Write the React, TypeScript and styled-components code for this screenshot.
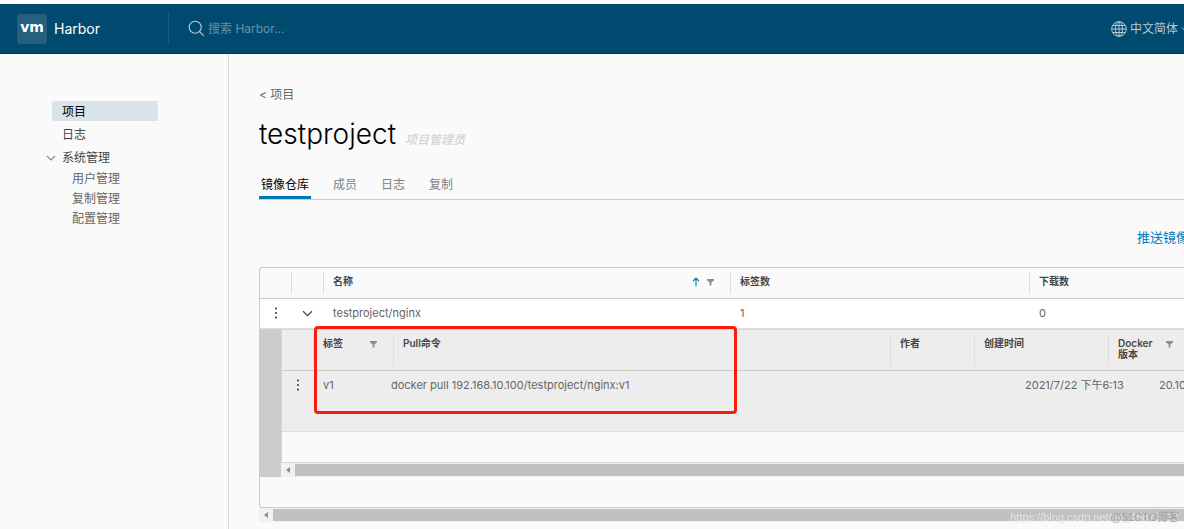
import React from "react";
import styled, { createGlobalStyle } from "styled-components";

const GlobalStyle = createGlobalStyle`
  *, *::before, *::after { box-sizing: border-box; }
  html, body, #root { height: 100%; }
  body {
    margin: 0;
    background: #fafafa;
    color: #666;
    font-family: Inter, "Noto Sans CJK SC", sans-serif;
    font-size: 12px;
    line-height: 20px;
    overflow: hidden;
  }
  a { color: inherit; text-decoration: none; }
  button, input { font: inherit; color: inherit; padding: 0; border: 0; background: none; }
`;

const Page = styled.div`
  min-height: 100%;
  display: flex;
  flex-direction: column;
  border-top: 4px solid #fff;
`;

const Header = styled.header`
  display: flex;
  align-items: center;
  height: 50px;
  padding-left: 17px;
  background: #004a70;
  border-bottom: 1px solid #00385a;
  white-space: nowrap;
  overflow: hidden;
`;

const Brand = styled.a`
  display: flex;
  align-items: center;
  gap: 7px;
  width: 151px;
  color: #fff;
  font-size: 14px;
`;

const Logo = styled.span`
  width: 30px;
  height: 30px;
  border-radius: 3px;
  background: #25617f;
  font-family: "DejaVu Sans", sans-serif;
  font-size: 14px;
  font-weight: 700;
  line-height: 27px;
  text-align: center;
`;

const Search = styled.label`
  flex: 1;
  display: flex;
  align-items: center;
  gap: 3px;
  height: 33px;
  padding-left: 19px;
  border-left: 1px solid #1b5a7c;
  color: #b3c9d4;
`;

const SearchInput = styled.input`
  flex: 1;
  min-width: 0;
  font-size: 12px;
  outline: none;
  &::placeholder { color: #6692a8; opacity: 1; }
`;

const Language = styled.button`
  display: flex;
  align-items: center;
  gap: 3px;
  width: 73px;
  flex: none;
  overflow: hidden;
  color: #b3c9d4;
  svg { flex: none; }
`;

const Body = styled.div`
  flex: 1;
  display: flex;
`;

const Sidebar = styled.nav`
  flex: none;
  width: 229px;
  padding: 47px 70px 0 46px;
  border-right: 1px solid #d9d9d9;
`;

const NavLink = styled.a<{ $active?: boolean }>`
  display: block;
  height: 20px;
  margin: 0 0 3px 6px;
  padding-left: 10px;
  border-radius: 2px 0 0 2px;
  line-height: 22px;
  color: ${(p) => (p.$active ? "#000" : "#454545")};
  background: ${(p) => (p.$active ? "#d9e4ea" : "transparent")};
`;

const NavGroup = styled.button`
  display: flex;
  align-items: center;
  gap: 6px;
  height: 22px;
  color: #454545;
`;

const SubLink = styled.a`
  display: block;
  padding-left: 26px;
`;

const Main = styled.main`
  flex: 1;
  min-width: 0;
  padding: 31px 0 0 30px;
`;

const Title = styled.h1`
  display: flex;
  align-items: baseline;
  gap: 9px;
  margin: 9px 0 0;
  color: #000;
  font-size: 28px;
  font-weight: 300;
  line-height: 40px;
`;

const Role = styled.em`
  color: #ccc;
  font-size: 12px;
  font-weight: 400;
`;

const Tabs = styled.nav`
  display: flex;
  gap: 20px;
  height: 35px;
  margin-top: 5px;
  border-bottom: 1px solid #ccc;
`;

const Tab = styled.a<{ $active?: boolean }>`
  height: 34px;
  padding: 10px 2px 0;
  color: ${(p) => (p.$active ? "#000" : "#808080")};
  border-bottom: 3px solid ${(p) => (p.$active ? "#0079b8" : "transparent")};
`;

const Toolbar = styled.div`
  display: flex;
  justify-content: flex-end;
  padding: 27px 0 20px;
`;

const PushButton = styled.button`
  width: 47px;
  overflow: hidden;
  white-space: nowrap;
  text-align: left;
  color: #0079b8;
  font-size: 13px;
`;

const GridWrap = styled.div`
  position: relative;
`;

const Table = styled.table`
  display: block;
  border: solid #ccc;
  border-width: 1px 0 1px 1px;
  border-radius: 3px 0 0 3px;
  font-size: 11px;
  thead, tbody { display: block; }
`;

const InnerTable = styled(Table)`
  border-radius: 0;
  border-color: #d6d6d6;
  background: #fafafa;
`;

const Row = styled.tr<{ $cols: string; $height: number; $bg?: string }>`
  display: grid;
  grid-template-columns: ${(p) => p.$cols};
  height: ${(p) => p.$height}px;
  background: ${(p) => p.$bg || "transparent"};
  border-bottom: 1px solid #ccc;
`;

const DataRow = styled(Row)`
  border-bottom-color: #ddd;
`;

const Th = styled.th`
  display: flex;
  align-items: flex-start;
  justify-content: space-between;
  min-width: 0;
  margin: 4px 0;
  padding: 4px 15px 0 9px;
  border-left: 1px solid #ddd;
  color: #454545;
  font-size: 10px;
  font-weight: 600;
  line-height: 11px;
  text-align: left;
  svg { flex: none; }
  &:first-child { border-left-color: transparent; }
`;

const WrapTh = styled(Th)`
  padding-right: 10px;
`;

const Td = styled.td<{ $center?: boolean }>`
  min-width: 0;
  padding: ${(p) => (p.$center ? "4px 0 0" : "4px 0 0 10px")};
  text-align: ${(p) => (p.$center ? "center" : "left")};
  overflow: hidden;
  white-space: nowrap;
`;

const IconButton = styled.button`
  display: inline-flex;
  align-items: center;
  justify-content: center;
  height: 20px;
  vertical-align: top;
`;

const HeadIcons = styled.span`
  display: flex;
  gap: 6px;
`;

const Detail = styled.tr`
  display: block;
  padding-left: 21px;
  background: #ccc;
`;

const DetailCell = styled.td`
  display: block;
  padding: 0;
`;

const EmptyRow = styled.tr`
  display: block;
  height: 30px;
`;

const ScrollTrack = styled.div`
  display: flex;
  align-items: center;
  height: 14px;
  background: #f1f1f1;
`;

const ScrollButton = styled.button`
  display: flex;
  align-items: center;
  justify-content: center;
  width: 14px;
  height: 14px;
`;

const ScrollThumb = styled.div`
  flex: 1;
  height: 12px;
  background: #c1c1c1;
`;

const Highlight = styled.div`
  position: absolute;
  left: 55px;
  top: 59px;
  width: 423px;
  height: 88px;
  border: 3px solid #fc1c0c;
  border-radius: 4px;
`;

const Watermark = styled.div<{ $shade: string }>`
  position: fixed;
  right: 5px;
  bottom: 2px;
  color: ${(p) => p.$shade};
  font-family: "Liberation Sans", "Noto Sans CJK SC", sans-serif;
  font-size: 11px;
  line-height: 20px;
`;

const Chevron = ({ size, color }: { size: number; color: string }) => (
  <svg width={size} height={size} viewBox="0 0 10 10" fill="none" stroke={color} strokeWidth="1.1">
    <path d="M1 3l4 4 4-4" />
  </svg>
);

const Dots = () => (
  <svg width="4" height="12" viewBox="0 0 4 12" fill="#454545">
    <circle cx="2" cy="1.5" r="1.1" />
    <circle cx="2" cy="6" r="1.1" />
    <circle cx="2" cy="10.5" r="1.1" />
  </svg>
);

const Filter = () => (
  <svg width="9" height="12" viewBox="0 0 9 12" fill="#8c8c8c">
    <path d="M1 3h7v1.2L5.4 6.6V9.5H3.6V6.6L1 4.2z" />
  </svg>
);

const ArrowUp = () => (
  <svg width="8" height="12" viewBox="0 0 8 12" fill="none" stroke="#0079b8" strokeWidth="1.1">
    <path d="M4 10.5V2M1 5l3-3 3 3" />
  </svg>
);

const Scrollbar = () => (
  <ScrollTrack>
    <ScrollButton aria-label="Scroll left">
      <svg width="4" height="6" viewBox="0 0 4 6" fill="#8a8a8a">
        <path d="M4 0v6L0 3z" />
      </svg>
    </ScrollButton>
    <ScrollThumb />
  </ScrollTrack>
);

const outerCols = "31px 32px minmax(0,407fr) minmax(0,299fr) minmax(0,155fr)";
const innerHeadCols = "31px 80px minmax(0,1fr) 84px 134px 76px";
const innerBodyCols = "31px 68px minmax(0,1fr) 84px 134px 35px";

export default function App() {
  return (
    <Page>
      <GlobalStyle />
      <Header>
        <Brand href="#">
          <Logo>vm</Logo>
          Harbor
        </Brand>
        <Search>
          <svg width="17" height="17" viewBox="0 0 17 17" fill="none" stroke="currentColor" strokeWidth="1.1">
            <circle cx="7.2" cy="7.2" r="6" />
            <path d="M11.5 11.5l4.3 4.3" />
          </svg>
          <SearchInput type="text" aria-label="搜索" placeholder="搜索 Harbor..." />
        </Search>
        <Language>
          <svg width="16" height="16" viewBox="0 0 16 16" fill="none" stroke="currentColor" strokeWidth="1">
            <circle cx="8" cy="8" r="7.3" />
            <ellipse cx="8" cy="8" rx="3.6" ry="7.3" />
            <path d="M8 .7v14.6M.7 8h14.6M2 4.5h12M2 11.5h12" />
          </svg>
          中文简体
          <Chevron size={8} color="#b3c9d4" />
        </Language>
      </Header>
      <Body>
        <Sidebar>
          <NavLink href="#" $active>项目</NavLink>
          <NavLink href="#">日志</NavLink>
          <NavGroup>
            <Chevron size={10} color="#8c8c8c" />
            系统管理
          </NavGroup>
          <SubLink href="#">用户管理</SubLink>
          <SubLink href="#">复制管理</SubLink>
          <SubLink href="#">配置管理</SubLink>
        </Sidebar>
        <Main>
          <a href="#">&lt; 项目</a>
          <Title>
            testproject
            <Role>项目管理员</Role>
          </Title>
          <Tabs>
            <Tab href="#" $active>镜像仓库</Tab>
            <Tab href="#">成员</Tab>
            <Tab href="#">日志</Tab>
            <Tab href="#">复制</Tab>
          </Tabs>
          <Toolbar>
            <PushButton>推送镜像</PushButton>
          </Toolbar>
          <GridWrap>
            <Table>
              <thead>
                <Row $cols={outerCols} $height={31}>
                  <Th />
                  <Th />
                  <Th>
                    名称
                    <HeadIcons>
                      <ArrowUp />
                      <Filter />
                    </HeadIcons>
                  </Th>
                  <Th>标签数</Th>
                  <Th>下载数</Th>
                </Row>
              </thead>
              <tbody>
                <DataRow $cols={outerCols} $height={30} $bg="#fff">
                  <Td $center>
                    <IconButton aria-label="操作"><Dots /></IconButton>
                  </Td>
                  <Td $center>
                    <IconButton aria-label="展开"><Chevron size={11} color="#454545" /></IconButton>
                  </Td>
                  <Td>testproject/nginx</Td>
                  <Td>1</Td>
                  <Td>0</Td>
                </DataRow>
                <Detail>
                  <DetailCell>
                    <InnerTable>
                      <thead>
                        <Row $cols={innerHeadCols} $height={41} $bg="#ededed">
                          <Th />
                          <Th>标签<Filter /></Th>
                          <Th>Pull命令</Th>
                          <Th>作者</Th>
                          <Th>创建时间</Th>
                          <WrapTh>
                            <span>Docker<br />版本</span>
                            <Filter />
                          </WrapTh>
                        </Row>
                      </thead>
                      <tbody>
                        <DataRow $cols={innerBodyCols} $height={61} $bg="#ededed">
                          <Td $center>
                            <IconButton aria-label="操作"><Dots /></IconButton>
                          </Td>
                          <Td>v1</Td>
                          <Td>docker pull 192.168.10.100/testproject/nginx:v1</Td>
                          <Td />
                          <Td>2021/7/22 下午6:13</Td>
                          <Td>20.10.7</Td>
                        </DataRow>
                        <EmptyRow />
                      </tbody>
                    </InnerTable>
                    <Scrollbar />
                  </DetailCell>
                </Detail>
                <EmptyRow />
              </tbody>
            </Table>
            <Scrollbar />
            <Highlight />
          </GridWrap>
        </Main>
      </Body>
      <Watermark $shade="#e4e4e4">https://blog.csdn.net/qq_45873413</Watermark>
      <Watermark $shade="#a0a0a0">@51CTO博客</Watermark>
    </Page>
  );
}
